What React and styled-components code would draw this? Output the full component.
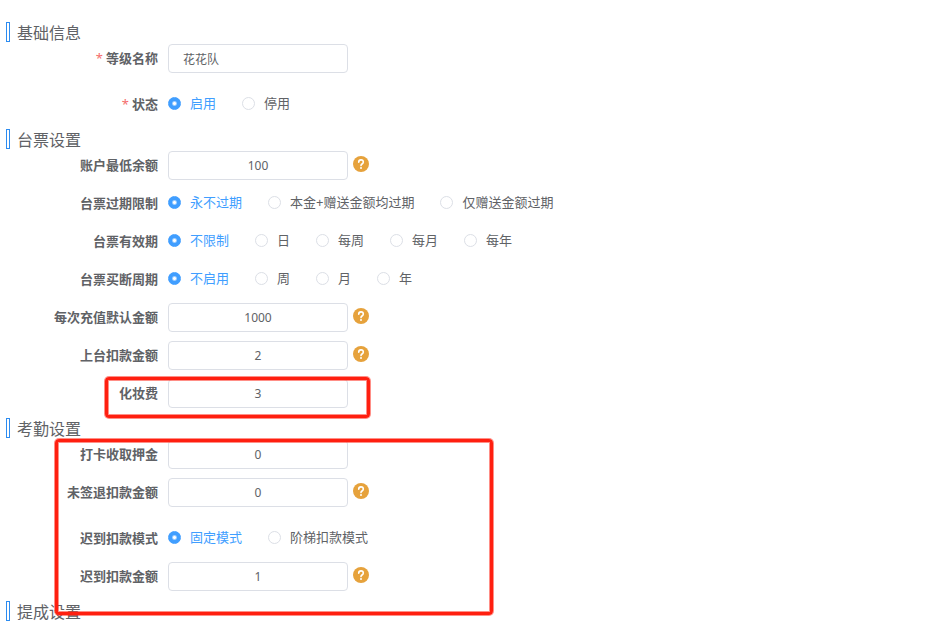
import React, { useState } from "react";
import styled, { createGlobalStyle } from "styled-components";

const GlobalStyle = createGlobalStyle`
  *, *::before {
    box-sizing: border-box;
  }
  body {
    margin: 0;
    background: #fff;
    color: #606266;
    font-family: "Noto Sans", "Noto Sans CJK SC", sans-serif;
    font-size: 13px;
  }
`;

const Form = styled.form`
  display: flex;
  flex-direction: column;
  gap: 8px;
  padding: 20px 0 15px;
`;

const Section = styled.section`
  display: flex;
  flex-direction: column;
`;

const Title = styled.h2`
  display: flex;
  align-items: center;
  gap: 7px;
  height: 24px;
  margin: 0;
  padding-left: 6px;
  font-size: 16px;
  font-weight: 400;

  &::before {
    content: "";
    width: 4px;
    height: 20px;
    border: 1px solid #2d8cf0;
  }
`;

const Fields = styled.div`
  position: relative;
  display: flex;
  flex-direction: column;
  gap: 9px;
`;

const Row = styled.div`
  position: relative;
  display: grid;
  grid-template-columns: 158px 1fr;
  column-gap: 10px;
  margin-top: ${(p) => (p.$spaced ? "8px" : "0")};
`;

const Label = styled.label`
  line-height: 29px;
  font-weight: 700;
  text-align: right;
  white-space: nowrap;
`;

const Star = styled.span`
  margin-right: 3px;
  color: #f56c6c;
  font-weight: 400;
`;

const Control = styled.div`
  display: flex;
  align-items: flex-start;
  gap: 5px;
`;

const Input = styled.input`
  width: 180px;
  height: 29px;
  padding: 0 14px;
  border: 1px solid #dcdfe6;
  border-radius: 4px;
  background: #fff;
  color: #606266;
  font-family: inherit;
  font-size: 12px;
  text-align: ${(p) => p.$align || "center"};
  outline: none;

  &:focus {
    border-color: #409eff;
  }
`;

const HelpButton = styled.button`
  display: flex;
  margin: 5px 0 0;
  padding: 0;
  border: none;
  background: none;
  cursor: pointer;
`;

const RadioGroup = styled.div`
  display: flex;
  flex-wrap: wrap;
  column-gap: 26px;
`;

const RadioLabel = styled.label`
  display: flex;
  align-items: center;
  gap: 9px;
  height: 26px;
  line-height: 26px;
  white-space: nowrap;
  cursor: pointer;
  color: ${(p) => (p.$checked ? "#409eff" : "#606266")};
`;

const Radio = styled.input`
  appearance: none;
  width: 13px;
  height: 13px;
  margin: 0;
  border: 1px solid #dcdfe6;
  border-radius: 50%;
  background: #fff;
  cursor: pointer;

  &:checked {
    border-color: #409eff;
    background: radial-gradient(circle, #fff 0 1px, #409eff 3px);
  }
`;

// red frame drawn over the form
const Mark = styled.div`
  position: absolute;
  top: ${(p) => p.$top}px;
  left: ${(p) => p.$left}px;
  width: ${(p) => p.$width}px;
  height: ${(p) => p.$height}px;
  border: 3px solid #ff1f10;
  border-radius: 4px;
  box-shadow: 0 0 0 1px rgba(255, 31, 16, 0.5), inset 0 0 0 1px rgba(255, 31, 16, 0.5);
  pointer-events: none;
`;

function Help() {
  return (
    <HelpButton type="button" aria-label="说明">
      <svg width="16" height="16" viewBox="0 0 16 16" fill="none">
        <circle cx="8" cy="8" r="8" fill="#e6a23c" />
        <path
          d="M5.7 6.3C5.7 4.8 6.7 3.9 8 3.9s2.3.9 2.3 2.1c0 1-.6 1.5-1.3 2-.7.5-1 .8-1 1.6"
          stroke="#fff"
          strokeWidth="1.6"
          strokeLinecap="round"
        />
        <circle cx="8" cy="11.9" r="1" fill="#fff" />
      </svg>
    </HelpButton>
  );
}

function InputField({ id, label, value, required, help, align, children }) {
  const [text, setText] = useState(value);
  return (
    <Row>
      <Label htmlFor={id}>
        {required && <Star>*</Star>}
        {label}
      </Label>
      <Control>
        <Input id={id} $align={align} value={text} onChange={(e) => setText(e.target.value)} />
        {help && <Help />}
      </Control>
      {children}
    </Row>
  );
}

function RadioField({ id, label, options, required, spaced }) {
  const [current, setCurrent] = useState(options[0]);
  return (
    <Row $spaced={spaced}>
      <Label as="span" id={id}>
        {required && <Star>*</Star>}
        {label}
      </Label>
      <RadioGroup role="radiogroup" aria-labelledby={id}>
        {options.map((item) => (
          <RadioLabel key={item} $checked={item === current}>
            <Radio
              type="radio"
              name={id}
              checked={item === current}
              onChange={() => setCurrent(item)}
            />
            {item}
          </RadioLabel>
        ))}
      </RadioGroup>
    </Row>
  );
}

function App() {
  return (
    <>
      <GlobalStyle />
      <Form>
        <Section>
          <Title>基础信息</Title>
          <Fields>
            <InputField id="name" label="等级名称" value="花花队" align="left" required />
            <RadioField id="status" label="状态" options={["启用", "停用"]} required spaced />
          </Fields>
        </Section>

        <Section>
          <Title>台票设置</Title>
          <Fields>
            <InputField id="minBalance" label="账户最低余额" value="100" help />
            <RadioField
              id="expireLimit"
              label="台票过期限制"
              options={["永不过期", "本金+赠送金额均过期", "仅赠送金额过期"]}
            />
            <RadioField
              id="validity"
              label="台票有效期"
              options={["不限制", "日", "每周", "每月", "每年"]}
            />
            <RadioField id="buyout" label="台票买断周期" options={["不启用", "周", "月", "年"]} />
            <InputField id="recharge" label="每次充值默认金额" value="1000" help />
            <InputField id="stageFee" label="上台扣款金额" value="2" help />
            <InputField id="makeupFee" label="化妆费" value="3">
              <Mark $top={-2} $left={105} $width={265} $height={41} />
            </InputField>
          </Fields>
        </Section>

        <Section>
          <Title>考勤设置</Title>
          <Fields>
            <InputField id="deposit" label="打卡收取押金" value="0" />
            <InputField id="noSignOut" label="未签退扣款金额" value="0" help />
            <RadioField
              id="lateMode"
              label="迟到扣款模式"
              options={["固定模式", "阶梯扣款模式"]}
              spaced
            />
            <InputField id="lateFee" label="迟到扣款金额" value="1" help />
            <Mark $top={-1} $left={55} $width={438} $height={176} />
          </Fields>
        </Section>

        <Section>
          <Title>提成设置</Title>
        </Section>
      </Form>
    </>
  );
}

export default App;
